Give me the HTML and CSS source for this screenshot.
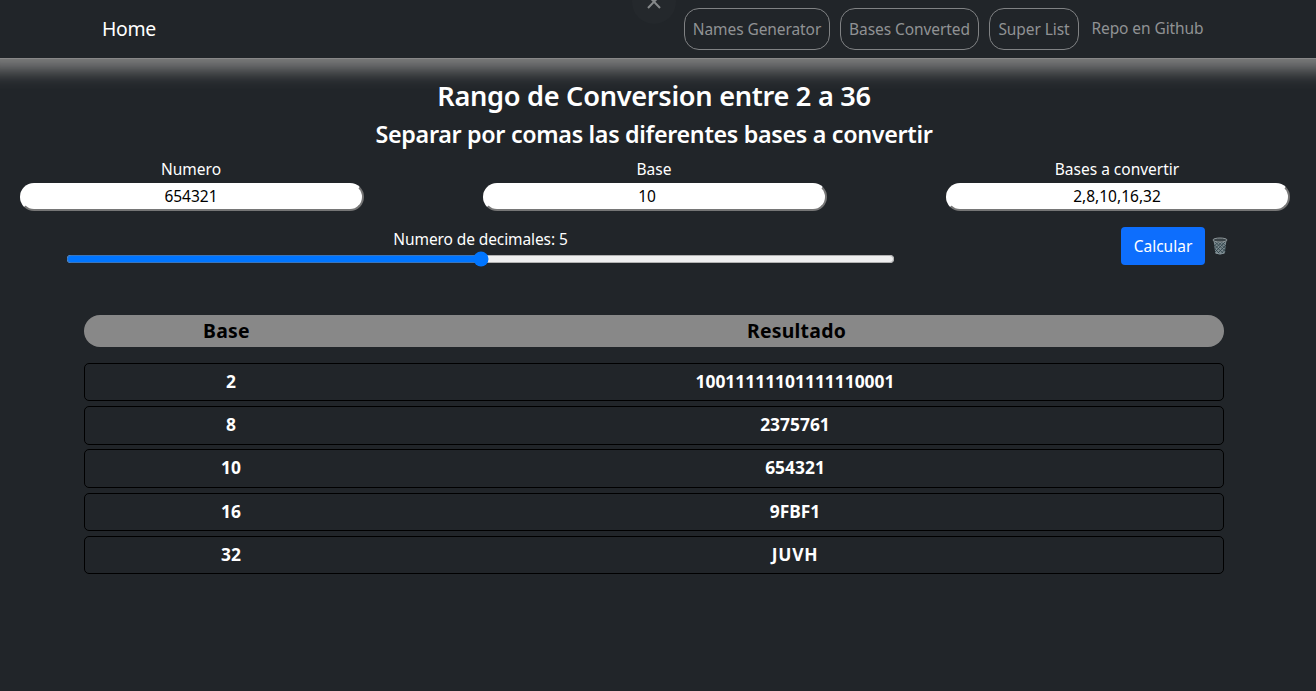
FILE: index.html
```html
<!DOCTYPE html>
<html lang="es">
<head>
<meta charset="utf-8">
<title>Bases Converted</title>
<link rel="stylesheet" href="styles.css">
</head>
<body>
<header class="navbar">
  <a class="brand">Home</a>
  <nav class="links">
    <a class="link pill names">Names Generator</a>
    <a class="link pill bases">Bases Converted</a>
    <a class="link pill super">Super List</a>
    <a class="link repo">Repo en Github</a>
  </nav>
  <div class="close-tab"><svg width="16" height="16" viewBox="0 0 16 16"><path d="M2 1.500L14 14M14 1.500L2 14" /></svg></div>
</header>
<main>
  <h2 class="title">Rango de Conversion entre 2 a 36</h2>
  <h3 class="subtitle">Separar por comas las diferentes bases a convertir</h3>
  <div class="fields">
    <label class="field"><span class="caption">Numero</span><input class="input" value="654321"></label>
    <label class="field"><span class="caption">Base</span><input class="input input-base" value="10"></label>
    <label class="field"><span class="caption">Bases a convertir</span><input class="input" value="2,8,10,16,32"></label>
  </div>
  <div class="controls">
    <label class="decimals"><span class="decimals-text">Numero de decimales: 5</span><input class="range" type="range" min="0" max="10" value="5"></label>
    <div class="actions">
      <button class="calc">Calcular</button>
      <svg class="trash" width="16" height="18" viewBox="0 0 16 18"><path d="M1.500 3L3.300 16Q8 18.500 12.700 16L14.500 3Z" fill="#7b898e"/><path d="M2 4L14 15M5 4L14 12M8 4L14 9M2.500 8L12 17M3 12L8 17M14 4L3 15M11 4L2.500 12M8 4L2 9M14 8L5 17M13 12L9 17" fill="none" stroke="#2f4149" stroke-width=".8"/><ellipse cx="8" cy="3" rx="7" ry="2" fill="#3b4448" stroke="#8f989b"/><path d="M3.500 16Q8 18 12.500 16" fill="none" stroke="#87969c"/></svg>
    </div>
  </div>
  <section class="results">
    <div class="head"><span>Base</span><span>Resultado</span></div>
    <div class="rows">
      <div class="row"><span>2</span><span>10011111101111110001</span></div>
      <div class="row"><span>8</span><span>2375761</span></div>
      <div class="row"><span>10</span><span>654321</span></div>
      <div class="row"><span>16</span><span>9FBF1</span></div>
      <div class="row"><span>32</span><span class="letters">JUVH</span></div>
    </div>
  </section>
</main>
</body>
</html>
```
FILE: styles.css
```css
* { box-sizing: border-box; }
body {
  margin: 0;
  min-height: 691px;
  overflow: hidden;
  background: #212529;
  color: #fff;
  font: 15.5px/24px "Noto Sans", "Open Sans", sans-serif;
}
.navbar {
  position: relative;
  display: flex;
  justify-content: space-between;
  height: 58px;
  padding: 8px 112px 8px 102px;
  background: #212529;
  box-shadow: 0 1px #888, 0 -8px 17px 20px gray;
}
.brand { font-size: 19.4px; line-height: 42px; letter-spacing: -.3px; }
.links { display: flex; align-items: flex-start; gap: 10px; }
.link { padding: 8px 0; color: #909294; white-space: nowrap; letter-spacing: -.08px; text-align: center; }
.pill { border: 1px solid #808284; border-radius: 15px; }
.names { width: 146px; }
.bases { width: 139px; }
.super { width: 90px; }
.repo { width: 115px; padding-left: 2px; }
.close-tab {
  position: absolute;
  left: 632px;
  top: -20px;
  width: 44px;
  height: 44px;
  border-radius: 50%;
  background: #24282c;
  display: flex;
  justify-content: center;
  align-items: center;
}
.close-tab svg { fill: none; stroke: #85888a; stroke-width: 2; }
.title, .subtitle { margin: 0; font-weight: 560; text-align: center; padding-right: 8px; }
.title { padding-top: 21px; font-size: 27.2px; line-height: 34px; letter-spacing: -.3px; }
.subtitle { padding-top: 7px; font-size: 23.3px; line-height: 28px; letter-spacing: -.32px; }
.fields { display: flex; justify-content: space-between; padding: 9px 26px 0 20px; }
.field { display: flex; flex-direction: column; width: 344px; text-align: center; gap: 2px; }
.caption { padding-right: 2px; }
.input {
  height: 28px;
  padding: 0 2px 2px 0;
  border: 2px solid;
  border-color: #fff #767676 #767676 #fff;
  border-radius: 15px;
  background: #fff;
  color: #000;
  font: inherit;
  text-align: center;
}
.input-base { padding-right: 16px; }
.controls { display: flex; justify-content: space-between; padding: 16px 88px 0 66px; }
.decimals { display: flex; flex-direction: column; width: 829px; text-align: center; }
.decimals-text { letter-spacing: -.1px; }
.range { width: 100%; height: 16px; margin: 0; }
.actions { display: flex; align-items: center; gap: 7px; height: 38px; }
.calc { width: 84px; height: 38px; padding: 0; border: 0; border-radius: 4px; background: #0d6efd; color: #fff; font: inherit; }
.results { width: 1140px; margin: 48px 0 0 84px; font-weight: 700; text-align: center; }
.head, .row { display: grid; grid-template-columns: 1fr 3fr; }
.head { height: 32px; border-radius: 16px; background: #888; color: #000; font-size: 19.4px; line-height: 32px; letter-spacing: .25px; }
.rows { display: flex; flex-direction: column; gap: 4.8px; padding-top: 16px; }
.row { height: 38.4px; padding: 0 5px; border: 1px solid #000; border-radius: 5px; font-size: 17.4px; line-height: 34px; }
.letters { letter-spacing: .7px; }
```
